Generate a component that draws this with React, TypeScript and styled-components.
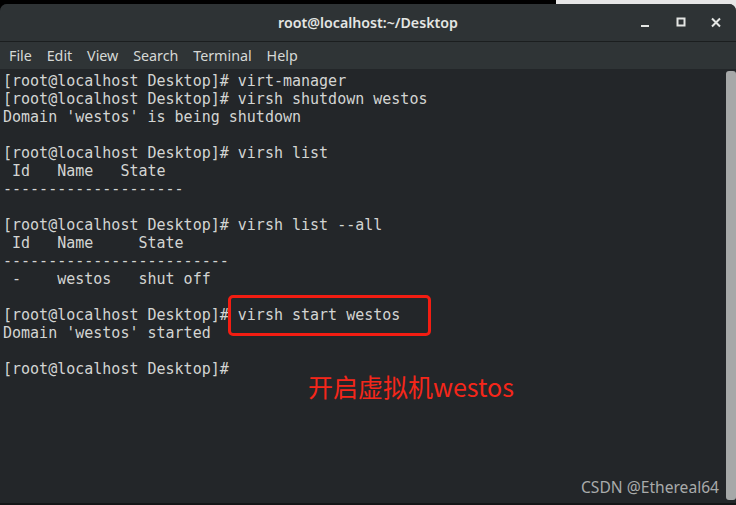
import React from 'react';
import styled, { createGlobalStyle } from 'styled-components';

const GlobalStyle = createGlobalStyle`
  html, body {
    margin: 0;
    padding: 0;
    background: #000;
  }
  body {
    width: 736px;
    height: 505px;
    overflow: hidden;
  }
`;

const Screen = styled.div`
  display: flex;
  flex-direction: column;
  width: 736px;
  height: 505px;
  background: linear-gradient(to right, #000 556px, #e6e6e6 556px);
  position: relative;
`;

const TopStrip = styled.div`
  display: flex;
  height: 4px;
  flex-shrink: 0;
`;

const StripPart = styled.div<{ $light?: boolean }>`
  flex: ${({ $light }) => ($light ? '1' : '0 0 556px')};
  background: ${({ $light }) => ($light ? '#e6e6e6' : '#000')};
`;

const Window = styled.div`
  flex: 1;
  display: flex;
  flex-direction: column;
  background: #232629;
  border-radius: 7px 7px 0 0;
  overflow: hidden;
  position: relative;
`;

const TitleBar = styled.div`
  height: 37px;
  flex-shrink: 0;
  display: flex;
  align-items: center;
  justify-content: center;
  position: relative;
  background: #2e3335;
  border-bottom: 1px solid #1b1e1f;
  font-family: 'Noto Sans', 'DejaVu Sans', sans-serif;
  font-size: 14.2px;
  font-weight: 600;
  color: #e4e6e4;
`;

const Controls = styled.div`
  position: absolute;
  right: 14px;
  top: 0;
  bottom: 0;
  display: flex;
  align-items: center;
  gap: 23px;
`;

const ControlIcon = styled.svg`
  width: 12px;
  height: 12px;
  display: block;
`;

const MenuBar = styled.div`
  height: 27px;
  flex-shrink: 0;
  display: flex;
  align-items: center;
  gap: 14.8px;
  padding: 0 0 0 9px;
  background: #2f3436;
  font-family: 'Noto Sans', 'DejaVu Sans', sans-serif;
  font-size: 14.3px;
  color: #d6d9d6;
`;

const MenuItem = styled.span``;

const TermBody = styled.div`
  flex: 1;
  display: flex;
  position: relative;
  border-bottom: 2px solid #141617;
`;

const Output = styled.pre`
  flex: 1;
  margin: 0;
  padding: 3px 0 0 3px;
  font-family: 'DejaVu Sans Mono', 'Liberation Mono', monospace;
  font-size: 15px;
  line-height: 18px;
  color: #d3d5d3;
  position: relative;
`;

const Boxed = styled.span`
  position: relative;
  &::after {
    content: '';
    position: absolute;
    left: -10px;
    right: -31px;
    top: -11px;
    bottom: -12px;
    border: 3px solid #f21d12;
    border-radius: 5px;
  }
`;

const Scroll = styled.div`
  width: 14px;
  flex-shrink: 0;
  display: flex;
  justify-content: flex-start;
  padding: 2px 0 3px 4px;
  box-sizing: border-box;
`;

const Thumb = styled.div`
  width: 6px;
  background: #a6a8a8;
  border-radius: 3px;
`;

const Note = styled.div`
  position: absolute;
  left: 308px;
  top: 302px;
  font-family: 'Noto Sans CJK SC', 'Noto Sans', sans-serif;
  font-size: 25px;
  line-height: 30px;
  color: #f5261a;
`;

const Watermark = styled.div`
  position: absolute;
  right: 17px;
  bottom: 5px;
  font-family: 'Noto Sans', 'DejaVu Sans', sans-serif;
  font-size: 15.6px;
  color: #a9abab;
`;

const menus = ['File', 'Edit', 'View', 'Search', 'Terminal', 'Help'];
const P = '[root@localhost Desktop]# ';

export default function App() {
  return (
    <>
      <GlobalStyle />
      <Screen>
        <TopStrip>
          <StripPart />
          <StripPart $light />
        </TopStrip>
        <Window>
          <TitleBar>
            root@localhost:~/Desktop
            <Controls>
              <ControlIcon viewBox="0 0 12 12">
                <rect x="1" y="8" width="8" height="2" fill="#e4e6e4" />
              </ControlIcon>
              <ControlIcon viewBox="0 0 12 12">
                <rect x="2.5" y="1.5" width="7" height="7" fill="none" stroke="#e4e6e4" strokeWidth="2" />
              </ControlIcon>
              <ControlIcon viewBox="0 0 12 12">
                <path d="M2 1.5 L10 9.5 M10 1.5 L2 9.5" stroke="#e4e6e4" strokeWidth="2" />
              </ControlIcon>
            </Controls>
          </TitleBar>
          <MenuBar>
            {menus.map((m) => (
              <MenuItem key={m}>{m}</MenuItem>
            ))}
          </MenuBar>
          <TermBody>
            <Output>
              {P}virt-manager{'\n'}
              {P}virsh shutdown westos{'\n'}
              Domain 'westos' is being shutdown{'\n'}
              {'\n'}
              {P}virsh list{'\n'}
              {' Id   Name   State\n'}
              {'--------------------\n'}
              {'\n'}
              {P}virsh list --all{'\n'}
              {' Id   Name     State\n'}
              {'-------------------------\n'}
              {' -    westos   shut off\n'}
              {'\n'}
              {P}
              <Boxed>virsh start westos</Boxed>
              {'\n'}
              Domain 'westos' started{'\n'}
              {'\n'}
              {P}
            </Output>
            <Scroll>
              <Thumb style={{ flex: 1 }} />
            </Scroll>
            <Note>开启虚拟机westos</Note>
            <Watermark>CSDN @Ethereal64</Watermark>
          </TermBody>
        </Window>
      </Screen>
    </>
  );
}
